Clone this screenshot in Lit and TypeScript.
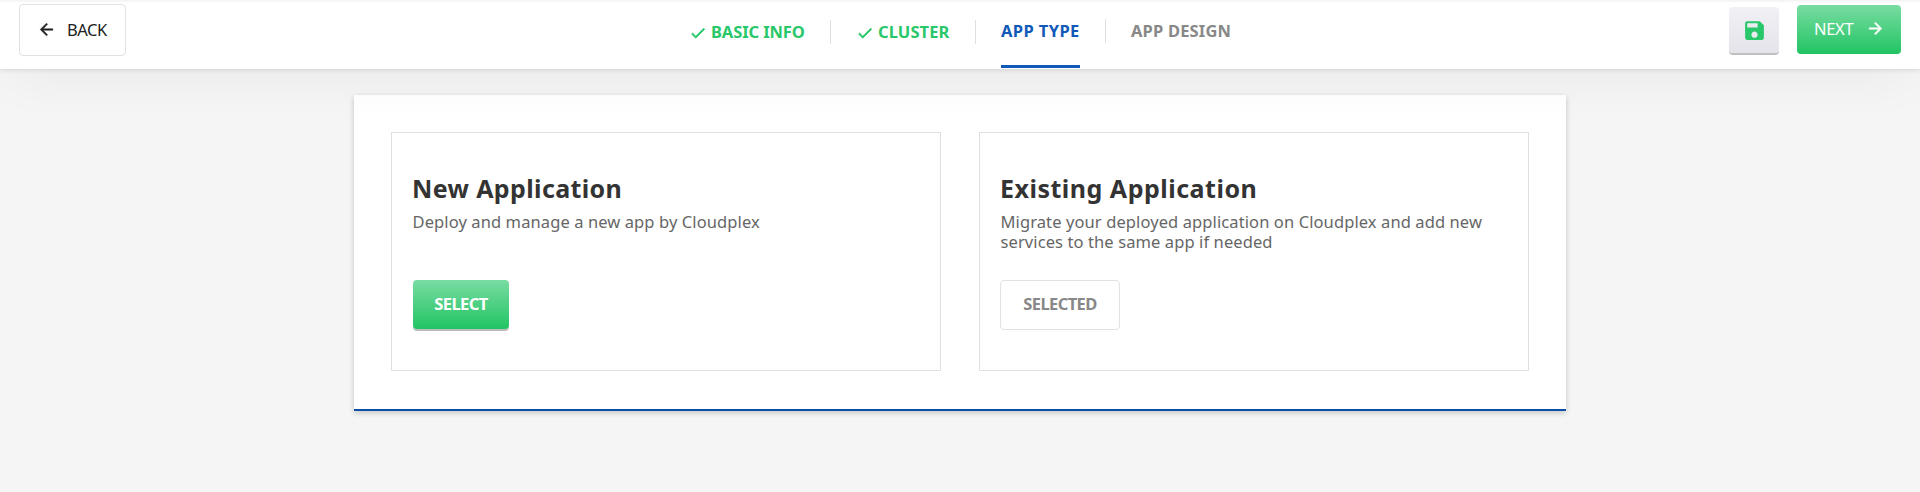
import { LitElement, html, css, svg, SVGTemplateResult } from "lit";
import { customElement } from "lit/decorators.js";

const icons: Record<string, SVGTemplateResult> = {
  back: svg`<path d="M20 11H7.83l5.59-5.59L12 4l-8 8 8 8 1.41-1.41L7.83 13H20v-2z"/>`,
  next: svg`<path d="M12 4l-1.41 1.41L16.17 11H4v2h12.17l-5.58 5.59L12 20l8-8z"/>`,
  check: svg`<path d="M9 16.17L4.83 12l-1.42 1.41L9 19 21 7l-1.41-1.41z"/>`,
  save: svg`<path d="M17 3H5c-1.11 0-2 .9-2 2v14c0 1.1.89 2 2 2h14c1.1 0 2-.9 2-2V7l-4-4zm-5 16c-1.66 0-3-1.34-3-3s1.34-3 3-3 3 1.34 3 3-1.34 3-3 3zm3-10H5V5h10v4z"/>`,
};

const icon = (name: string, size: number) =>
  html`<svg width=${size} height=${size} viewBox="0 0 24 24">${icons[name]}</svg>`;

@customElement("app-root")
export class AppRoot extends LitElement {
  static styles = css`
    :host { display: block; height: 492px; background: #f5f5f5; overflow: hidden; font-family: "Noto Sans", "Open Sans", sans-serif; font-size: 16.5px; line-height: 20px; }
    * { box-sizing: border-box; }
    svg { display: block; fill: currentColor; flex: none; }
    button { font: inherit; border: 0; margin: 0; padding: 0; display: flex; align-items: center; border-radius: 4px; white-space: nowrap; }
    header { position: relative; z-index: 1; height: 69px; padding: 0 19px; background: linear-gradient(#f2f2f2, #fff 3px); display: grid; grid-template-columns: 671px 1fr 172px; align-items: start;
      box-shadow: 0 1px 5px rgba(0,0,0,.12), 0 20px 52px -11px rgba(0,0,0,.05); }
    .back { width: 107px; height: 52px; margin-top: 4px; padding-left: 17px; border: 1px solid #e2e2e2; background: #fff; color: #212121; letter-spacing: -.45px; gap: 11px; }
    .back svg, .next svg { margin-bottom: 2px; stroke: currentColor; stroke-width: .6; }
    .steps { display: flex; font-weight: 700; white-space: nowrap; }
    .step { height: 24px; margin-top: 20px; display: flex; align-items: center; border-right: 1px solid #e0e0e0; color: #28c76a; }
    .step svg { margin: 2px 4px 0 -1px; stroke: currentColor; stroke-width: .9; }
    .info { width: 141px; letter-spacing: -.1px; }
    .cluster { width: 145px; padding-left: 26px; letter-spacing: .1px; }
    .type { width: 130px; height: 49px; margin-top: 19px; padding-left: 25px; border: 0; color: #1059b8; letter-spacing: .4px; display: grid; grid-template-columns: 79px 1fr; align-items: stretch; }
    .type .name { line-height: 24px; border-bottom: 3px solid #1059b8; }
    .type .rule { height: 24px; border-right: 1px solid #e0e0e0; }
    .design { margin-top: 19px; padding-left: 25px; border: 0; color: #888; letter-spacing: .18px; }
    .actions { display: flex; gap: 18px; align-items: flex-start; }
    .save { width: 50px; height: 46px; margin-top: 7px; justify-content: center; color: #28c76a; background: linear-gradient(#f1f0f5, #e6e4eb); box-shadow: 0 2px 0 #bfbfc1; }
    .green { color: #fff; background: linear-gradient(#79dca2, #21c463); height: 49px; }
    .next { width: 104px; margin-top: 5px; padding-left: 17px; gap: 13px; letter-spacing: -.3px; }
    .next span { padding-bottom: 1px; }
    .card { width: 1212px; height: 316px; margin: 26px auto 0; padding: 37px 37px 0; background: #fff; border-bottom: 2px solid #0d4da4; box-shadow: 0 2px 6px rgba(0,0,0,.2); display: grid; grid-template-columns: 550px 550px; gap: 38px; align-items: start; }
    .option { height: 239px; border: 1px solid #e0e0e0; padding: 40px 20px 0 21px; }
    .option:last-child { padding-left: 20px; }
    h2 { margin: 0 0 9px -1px; font-size: 25px; line-height: 30px; font-weight: 700; color: #333; letter-spacing: .38px; }
    p { margin: 0 0 28px -.5px; width: 500px; height: 40px; color: #666; letter-spacing: .1px; }
    .option:last-child h2 { margin-left: 0; letter-spacing: .5px; }
    .option:last-child p { margin-left: .5px; }
    .select { width: 96px; justify-content: center; font-weight: 700; letter-spacing: -.6px; padding-bottom: 1px; box-shadow: 0 2px 0 #bbbdbc; }
    .selected { width: 120px; height: 50px; justify-content: center; font-weight: 700; letter-spacing: -.6px; padding-bottom: 2px; border: 1px solid #e2e2e2; background: #fff; color: #888; }
  `;

  render() {
    return html`
      <header>
        <button class="back">${icon("back", 19)}<span>BACK</span></button>
        <nav class="steps">
          <div class="step info">${icon("check", 18)}<span>BASIC INFO</span></div>
          <div class="step cluster">${icon("check", 18)}<span>CLUSTER</span></div>
          <div class="step type"><span class="name">APP TYPE</span><span class="rule"></span></div>
          <div class="step design"><span>APP DESIGN</span></div>
        </nav>
        <div class="actions">
          <button class="save">${icon("save", 25)}</button>
          <button class="green next"><span>NEXT</span>${icon("next", 19)}</button>
        </div>
      </header>
      <main class="card">
        <section class="option">
          <h2>New Application</h2>
          <p>Deploy and manage a new app by Cloudplex</p>
          <button class="green select">SELECT</button>
        </section>
        <section class="option">
          <h2>Existing Application</h2>
          <p>Migrate your deployed application on Cloudplex and add new services to the same app if needed</p>
          <button class="selected">SELECTED</button>
        </section>
      </main>
    `;
  }
}
